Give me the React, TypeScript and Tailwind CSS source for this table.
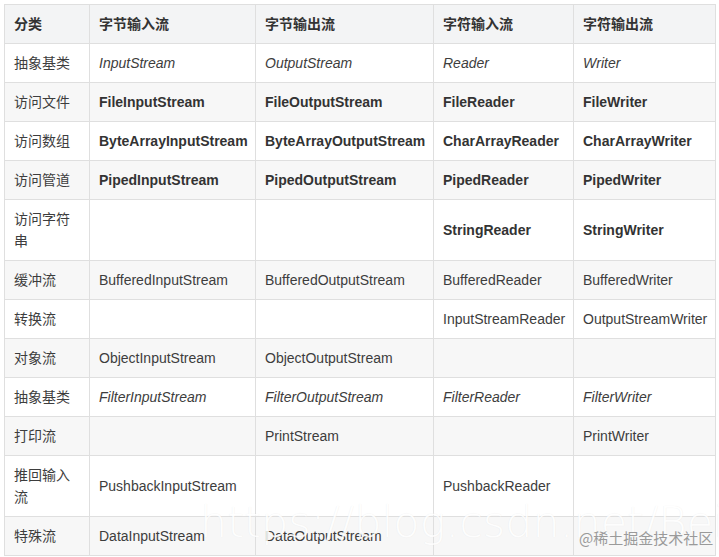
import React from 'react';

type Cell = { text: string; style?: 'i' | 'b' };

const rows: { label: string; cells: (Cell | null)[] }[] = [
  { label: '抽象基类', cells: [{ text: 'InputStream', style: 'i' }, { text: 'OutputStream', style: 'i' }, { text: 'Reader', style: 'i' }, { text: 'Writer', style: 'i' }] },
  { label: '访问文件', cells: [{ text: 'FileInputStream', style: 'b' }, { text: 'FileOutputStream', style: 'b' }, { text: 'FileReader', style: 'b' }, { text: 'FileWriter', style: 'b' }] },
  { label: '访问数组', cells: [{ text: 'ByteArrayInputStream', style: 'b' }, { text: 'ByteArrayOutputStream', style: 'b' }, { text: 'CharArrayReader', style: 'b' }, { text: 'CharArrayWriter', style: 'b' }] },
  { label: '访问管道', cells: [{ text: 'PipedInputStream', style: 'b' }, { text: 'PipedOutputStream', style: 'b' }, { text: 'PipedReader', style: 'b' }, { text: 'PipedWriter', style: 'b' }] },
  { label: '访问字符串', cells: [null, null, { text: 'StringReader', style: 'b' }, { text: 'StringWriter', style: 'b' }] },
  { label: '缓冲流', cells: [{ text: 'BufferedInputStream' }, { text: 'BufferedOutputStream' }, { text: 'BufferedReader' }, { text: 'BufferedWriter' }] },
  { label: '转换流', cells: [null, null, { text: 'InputStreamReader' }, { text: 'OutputStreamWriter' }] },
  { label: '对象流', cells: [{ text: 'ObjectInputStream' }, { text: 'ObjectOutputStream' }, null, null] },
  { label: '抽象基类', cells: [{ text: 'FilterInputStream', style: 'i' }, { text: 'FilterOutputStream', style: 'i' }, { text: 'FilterReader', style: 'i' }, { text: 'FilterWriter', style: 'i' }] },
  { label: '打印流', cells: [null, { text: 'PrintStream' }, null, { text: 'PrintWriter' }] },
  { label: '推回输入流', cells: [{ text: 'PushbackInputStream' }, null, { text: 'PushbackReader' }, null] },
  { label: '特殊流', cells: [{ text: 'DataInputStream' }, { text: 'DataOutputStream' }, null, null] },
];

const headers = ['分类', '字节输入流', '字节输出流', '字符输入流', '字符输出流'];

export default function App() {
  return (
    <div className="relative w-[719px] h-[557px] overflow-hidden bg-white p-1 font-['Liberation_Sans','Noto_Sans_CJK_SC',sans-serif] text-[14px] leading-[22px] text-[#3d3d3d]">
      <table className="w-[711px] table-fixed border-collapse">
        <colgroup>
          <col className="w-[85px]" />
          <col className="w-[166px]" />
          <col className="w-[178px]" />
          <col className="w-[140px]" />
          <col className="w-[142px]" />
        </colgroup>
        <thead>
          <tr className="bg-[#f3f4f5]">
            {headers.map((h) => (
              <th key={h} className="border border-[#dfdfdf] px-[9px] py-2 text-left font-bold text-[#333]">
                {h}
              </th>
            ))}
          </tr>
        </thead>
        <tbody>
          {rows.map((row, i) => (
            <tr key={i} className={i % 2 === 1 ? 'bg-[#f7f7f7]' : 'bg-white'}>
              <td className="border border-[#dfdfdf] px-[9px] py-2">{row.label}</td>
              {row.cells.map((c, j) => (
                <td
                  key={j}
                  className={`border border-[#dfdfdf] px-[9px] py-2 whitespace-nowrap ${
                    c?.style === 'i' ? 'italic' : c?.style === 'b' ? 'font-bold text-[#333]' : ''
                  }`}
                >
                  {c?.text}
                </td>
              ))}
            </tr>
          ))}
        </tbody>
      </table>

      {/* watermark */}
      <div className="pointer-events-none absolute left-[200px] top-[497px] whitespace-nowrap text-[43px] leading-[50px] text-white opacity-85 font-['DejaVu_Sans',sans-serif] font-extralight [text-shadow:0_0_1px_rgba(0,0,0,0.08)]">
        https://blog.csdn.net/BeiisBei
      </div>
      <div className="pointer-events-none absolute left-[579px] top-[528px] whitespace-nowrap text-[15px] leading-[20px] text-[#9a9a9a] font-['Noto_Sans_CJK_SC',serif]">
        @稀土掘金技术社区
      </div>
    </div>
  );
}
